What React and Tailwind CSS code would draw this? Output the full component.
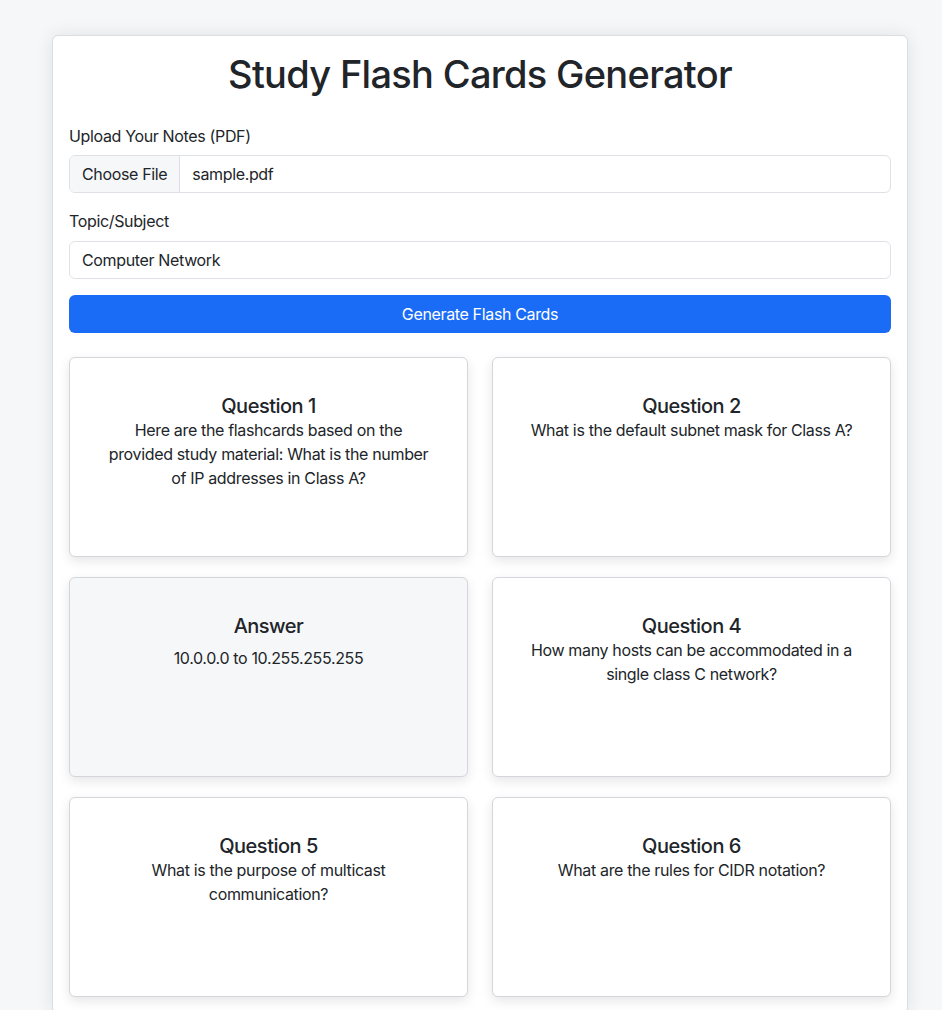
import React from "react";

const cards = [
  { type: "q", title: "Question 1", text: "Here are the flashcards based on the provided study material: What is the number of IP addresses in Class A?" },
  { type: "q", title: "Question 2", text: "What is the default subnet mask for Class A?" },
  { type: "a", title: "Answer", text: "10.0.0.0 to 10.255.255.255" },
  { type: "q", title: "Question 4", text: "How many hosts can be accommodated in a single class C network?" },
  { type: "q", title: "Question 5", text: "What is the purpose of multicast communication?" },
  { type: "q", title: "Question 6", text: "What are the rules for CIDR notation?" },
];

export default function App() {
  return (
    <div
      className="min-h-[1010px] bg-[#f6f7f9] text-[#212529] pt-[35px] pb-8 tracking-[-0.35px]"
      style={{ fontFamily: "Inter, 'Noto Sans', 'Liberation Sans', sans-serif" }}
    >
      <div className="ml-[52px] w-[856px] bg-white border border-[#dadde1] rounded-[6px] shadow-[0_0_18px_rgba(0,0,0,0.09)] px-4 pt-[14px] pb-4">
        <h1 className="text-[38px] leading-[48px] font-medium text-center tracking-[-0.7px] mb-[26px]">
          Study Flash Cards Generator
        </h1>

        <div className="mb-4">
          <label className="block text-[16px] leading-[24px] mb-[7px]">Upload Your Notes (PDF)</label>
          <div className="flex h-[38px] border border-[#dee2e6] rounded-[6px] overflow-hidden text-[16px] leading-[24px]">
            <div className="bg-[#f6f7f9] border-r border-[#dee2e6] px-3 flex items-center">Choose File</div>
            <div className="px-3 flex items-center">sample.pdf</div>
          </div>
        </div>

        <div className="mb-4">
          <label className="block text-[16px] leading-[24px] mb-2">Topic/Subject</label>
          <div className="h-[38px] border border-[#dee2e6] rounded-[6px] px-3 flex items-center text-[16px] leading-[24px]">
            Computer Network
          </div>
        </div>

        <button className="w-full h-[38px] bg-[#1a6cf6] text-white rounded-[6px] text-[16px] leading-[24px]">
          Generate Flash Cards
        </button>

        <div className="grid grid-cols-2 gap-x-6 gap-y-5 mt-6">
          {cards.map((c, i) => (
            <div
              key={i}
              className={`h-[200px] border border-[#d3d6da] rounded-[6px] shadow-[0_4px_12px_rgba(0,0,0,0.1)] px-[34px] pt-[36px] text-center ${
                c.type === "a" ? "bg-[#f6f7f9]" : "bg-white"
              }`}
            >
              <h5 className={`text-[20px] leading-[24px] font-medium tracking-[-0.5px] ${c.type === "a" ? "mb-2" : ""}`}>{c.title}</h5>
              <p className="text-[16px] leading-[24px]">{c.text}</p>
            </div>
          ))}
        </div>
      </div>
    </div>
  );
}
